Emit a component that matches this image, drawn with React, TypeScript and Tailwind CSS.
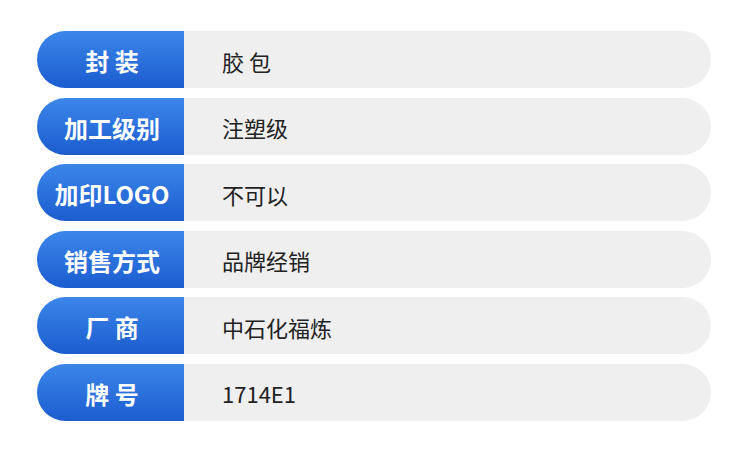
const rows: [string, string][] = [
  ["封 装", "胶 包"],
  ["加工级别", "注塑级"],
  ["加印LOGO", "不可以"],
  ["销售方式", "品牌经销"],
  ["厂 商", "中石化福炼"],
  ["牌 号", "1714E1"],
]

export default function App() {
  return (
    <div className="w-[750px] h-[452px] bg-white pt-[31px] pl-[37px] flex flex-col gap-[9.5px] font-['Noto_Sans_CJK_SC','Noto_Sans',sans-serif]">
      {rows.map(([label, value]) => (
        <div key={label} className="flex h-[57px] w-[674px]">
          {/* blue label pill */}
          <div className="w-[147px] h-full rounded-l-[29px] bg-gradient-to-b from-[#3c86ea] to-[#1c5ccf] flex items-center justify-center pl-[3px] pt-[3px] text-white text-[24px] font-bold whitespace-pre">
            {label}
          </div>
          {/* gray value area */}
          <div className="flex-1 h-full rounded-r-[29px] bg-[#efefef] flex items-center pl-[38px] pt-[3px] text-[#222222] text-[22px] whitespace-pre">
            {value}
          </div>
        </div>
      ))}
    </div>
  )
}
